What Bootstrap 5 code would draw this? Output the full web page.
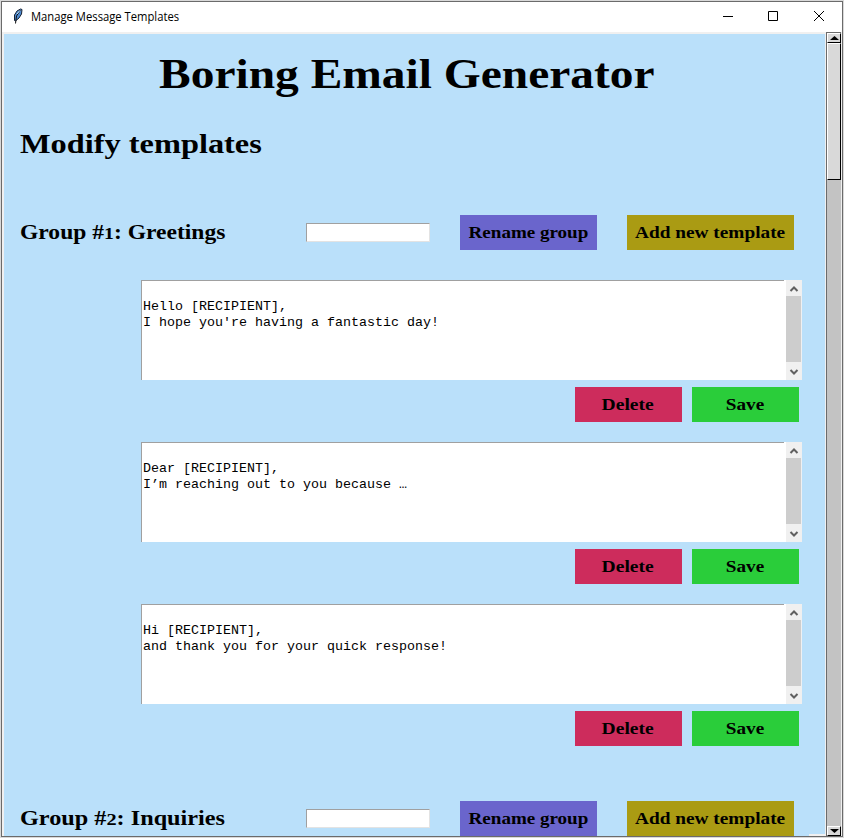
<!DOCTYPE html>
<html lang="en">
<head>
<meta charset="utf-8">
<meta name="viewport" content="width=device-width, initial-scale=1">
<title>Manage Message Templates</title>
<link href="https://cdn.jsdelivr.net/npm/bootstrap@5.3.0/dist/css/bootstrap.min.css" rel="stylesheet">
<style>
body{background:#d9d9d9;height:838px;overflow:hidden;padding:1px}
.window{height:836px;border:1px solid #6b6b6b;background:#f0f0f0}
.titlebar{height:30px;background:#fff;font:12px/30px "Open Sans","Noto Sans",sans-serif;color:#000}
.caption-text{transform:scaleX(.937);transform-origin:0 50%;white-space:nowrap}
.viewport-area{width:821px;margin:2px 0 0 2px;background:linear-gradient(#f0f0f0,#f0f0f0) right bottom/16px 2px no-repeat #bae0fa;overflow:hidden;color:#000}
.serif{font-family:Georgia,"Liberation Serif",serif;font-weight:700;white-space:nowrap;margin:0;color:#000}
.stretch{display:inline-block;transform:scaleX(var(--sx,1.13));transform-origin:0 50%}
.app-title{font-size:42px;line-height:50px;padding:15px 0 0 155px}
.subtitle{font-size:28px;line-height:34px;padding:28px 0 0 16px;--sx:1.156}
.group{padding-top:54px}
.group + .group{padding-top:35px}
.group-head{height:35px;padding-left:16px;margin-bottom:30px}
.group-name{width:286px;font-size:21px;line-height:35px;--sx:1.122}
.group + .group .group-name{--sx:1.154}
.old-digit{font-size:.84em}
.entry{width:124px;height:19px;border:1px solid;border-color:#a0a0a0 #e3e3e3 #e3e3e3 #a0a0a0;background:#fff;border-radius:0;padding:0;outline:0}
.flat{height:35px;border:0;border-radius:0;padding:0 1px 0 0;font-size:17px;line-height:35px;color:#000}
.flat .stretch{transform-origin:50% 50%}
.rename{width:137px;background:#6a65cc;margin-left:30px;--sx:1.12}
.add{width:167px;background:#aa9b13;margin-left:30px;--sx:1.135}
.delete{width:107px;background:#cd2c5c;--sx:1.15}
.save{width:107px;background:#2acd3a}
.template{height:162px;padding-left:137px}
.textbox{width:661px;height:100px;background:#fff}
.message{width:643px;height:100px;margin:0 2px 0 0;border:solid #a0a0a0;border-width:1px 0 0 1px;padding:18px 0 0 1px;font:13.333px/16px "Courier New","Liberation Mono",monospace;color:#000;overflow:hidden}
.inner-scroll{width:16px;background:#f0f0f0}
.inner-scroll .thumb{width:15px;height:66px;background:#cdcdcd}
.actions{padding:7px 0 0 434px;gap:10px}
.outer-scroll{width:15px;background:#c3c3c3;border:solid #6b6b6b;border-width:1px 0 0 1px;margin-left:1px}
.raised{border:1px solid;border-color:#fff #000 #000 #fff;background:#d9d9d9}
.outer-thumb{height:137px}
svg{display:block;flex:none}
</style>
</head>
<body>
<main class="window d-flex flex-column">
  <header class="titlebar d-flex">
    <svg width="29" height="30" viewBox="0 0 29 30"><path d="M12.500 18.500 12.500 13 15 9 18.500 7 20 7.500 19.500 12 17 16 13.500 19Z" fill="#4f8bd2" stroke="#182334"/><path d="M18.500 8 14.500 14 13.500 21.500" fill="none" stroke="#111"/><path d="M18 8.500 15 12" stroke="#bdddf5"/></svg>
    <span class="caption-text">Manage Message Templates</span>
    <svg class="ms-auto" width="126" height="30" viewBox="0 0 126 30" fill="none" stroke="#000"><path d="M7 14.500h10M52.500 9.500h9v9h-9zM98 9l10 10M108 9l-10 10"/></svg>
  </header>
  <div class="d-flex flex-grow-1 overflow-hidden">
    <div class="viewport-area">
      <h1 class="serif app-title"><span class="stretch">Boring Email Generator</span></h1>
      <h2 class="serif subtitle"><span class="stretch">Modify templates</span></h2>

      <section class="group">
        <div class="group-head d-flex align-items-center">
          <h3 class="serif group-name"><span class="stretch">Group #<span class="old-digit">1</span>: Greetings</span></h3>
          <input class="entry" type="text" aria-label="New group name">
          <button class="btn serif flat rename"><span class="stretch">Rename group</span></button>
          <button class="btn serif flat add"><span class="stretch">Add new template</span></button>
        </div>
        <div class="template">
          <div class="textbox d-flex">
            <pre class="message">Hello [RECIPIENT],
I hope you're having a fantastic day!</pre>
            <div class="inner-scroll">
              <svg width="16" height="16"><path d="M4.500 11 8 7.500 11.500 11" fill="none" stroke="#606060" stroke-width="2"/></svg>
              <div class="thumb"></div>
              <svg width="16" height="18"><path d="M4.500 8 8 11.500 11.500 8" fill="none" stroke="#606060" stroke-width="2"/></svg>
            </div>
          </div>
          <div class="actions d-flex">
            <button class="btn serif flat delete"><span class="stretch">Delete</span></button>
            <button class="btn serif flat save"><span class="stretch">Save</span></button>
          </div>
        </div>
        <div class="template">
          <div class="textbox d-flex">
            <pre class="message">Dear [RECIPIENT],
I’m reaching out to you because …</pre>
            <div class="inner-scroll">
              <svg width="16" height="16"><path d="M4.500 11 8 7.500 11.500 11" fill="none" stroke="#606060" stroke-width="2"/></svg>
              <div class="thumb"></div>
              <svg width="16" height="18"><path d="M4.500 8 8 11.500 11.500 8" fill="none" stroke="#606060" stroke-width="2"/></svg>
            </div>
          </div>
          <div class="actions d-flex">
            <button class="btn serif flat delete"><span class="stretch">Delete</span></button>
            <button class="btn serif flat save"><span class="stretch">Save</span></button>
          </div>
        </div>
        <div class="template">
          <div class="textbox d-flex">
            <pre class="message">Hi [RECIPIENT],
and thank you for your quick response!</pre>
            <div class="inner-scroll">
              <svg width="16" height="16"><path d="M4.500 11 8 7.500 11.500 11" fill="none" stroke="#606060" stroke-width="2"/></svg>
              <div class="thumb"></div>
              <svg width="16" height="18"><path d="M4.500 8 8 11.500 11.500 8" fill="none" stroke="#606060" stroke-width="2"/></svg>
            </div>
          </div>
          <div class="actions d-flex">
            <button class="btn serif flat delete"><span class="stretch">Delete</span></button>
            <button class="btn serif flat save"><span class="stretch">Save</span></button>
          </div>
        </div>
      </section>

      <section class="group">
        <div class="group-head d-flex align-items-center">
          <h3 class="serif group-name"><span class="stretch">Group #<span class="old-digit">2</span>: Inquiries</span></h3>
          <input class="entry" type="text" aria-label="New group name">
          <button class="btn serif flat rename"><span class="stretch">Rename group</span></button>
          <button class="btn serif flat add"><span class="stretch">Add new template</span></button>
        </div>
      </section>
    </div>
    <div class="outer-scroll d-flex flex-column">
      <div class="raised"><svg width="12" height="8"><path d="M2 6h9L6.500 2z"/></svg></div>
      <div class="raised outer-thumb"></div>
      <div class="raised mt-auto"><svg width="12" height="8"><path d="M2 2h9L6.500 6z"/></svg></div>
    </div>
  </div>
</main>
<script src="https://cdn.jsdelivr.net/npm/bootstrap@5.3.0/dist/js/bootstrap.bundle.min.js"></script>
</body>
</html>
